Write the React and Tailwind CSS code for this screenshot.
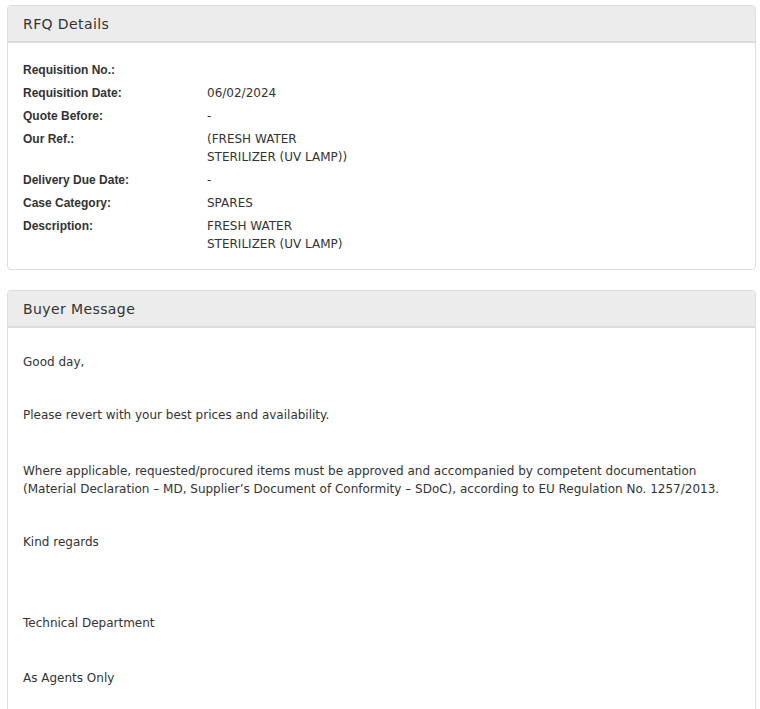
export default function App() {
  const rows = [
    ["Requisition No.:", ""],
    ["Requisition Date:", "06/02/2024"],
    ["Quote Before:", "-"],
    ["Our Ref.:", "(FRESH WATER\nSTERILIZER (UV LAMP))"],
    ["Delivery Due Date:", "-"],
    ["Case Category:", "SPARES"],
    ["Description:", "FRESH WATER\nSTERILIZER (UV LAMP)"],
  ];
  const dv = { fontFamily: '"DejaVu Sans", Verdana, sans-serif' };
  const ar = { fontFamily: '"Liberation Sans", Arial, sans-serif' };
  return (
    <div className="bg-white px-[7px] pt-[5px] text-[#333]" style={dv}>
      <div className="border border-[#dddddd] rounded-[4px] w-[749px]">
        <div className="h-[37px] bg-[#ececec] border-b-2 border-[#dddddd] rounded-t-[4px] px-[15px] pt-[2px] flex items-center text-[14px] tracking-[0.4px] text-[#333]">
          RFQ Details
        </div>
        <div className="px-[15px] pt-[18px] pb-[16px] flex flex-col gap-[5px]">
          {rows.map(([l, v]) => (
            <div key={l} className="flex leading-[18px] text-[12px]">
              <div className="w-[184px] font-bold" style={ar}>{l}</div>
              <div className="whitespace-pre-line">{v}</div>
            </div>
          ))}
        </div>
      </div>
      <div className="mt-[20px] border border-[#dddddd] rounded-[4px] w-[749px] min-h-[440px]">
        <div className="h-[37px] bg-[#ececec] border-b-2 border-[#dddddd] rounded-t-[4px] px-[15px] pt-[2px] flex items-center text-[14px] tracking-[0.4px] text-[#333]">
          Buyer Message
        </div>
        <div className="px-[15px] pt-[25px] text-[12px] leading-[18px]">
          <p>Good day,</p>
          <p className="mt-[35px]">Please revert with your best prices and availability.</p>
          <p className="mt-[38px]">
            Where applicable, requested/procured items must be approved and accompanied by competent documentation
            (Material Declaration – MD, Supplier’s Document of Conformity – SDoC), according to EU Regulation No. 1257/2013.
          </p>
          <p className="mt-[35px]">Kind regards</p>
          <p className="mt-[63px]">Technical Department</p>
          <p className="mt-[37px]">As Agents Only</p>
        </div>
      </div>
    </div>
  );
}
